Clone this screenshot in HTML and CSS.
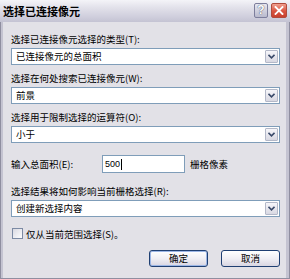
FILE: index.html
```html
<!DOCTYPE html>
<html lang="zh-CN">
<head>
<meta charset="utf-8">
<link rel="stylesheet" href="styles.css">
</head>
<body>
<div class="window">
  <div class="titlebar">
    <span class="title">选择已连接像元</span>
    <div class="caption-btns">
      <div class="cap-btn help">?</div>
      <div class="cap-btn close">
        <svg width="10" height="9" viewBox="0 0 10 9"><path d="M1.5 1 L8.5 8 M8.5 1 L1.5 8" stroke="#fff" stroke-width="1.8" fill="none" stroke-linecap="square"/></svg>
      </div>
    </div>
  </div>
  <div class="content">
    <div class="group">
      <div class="label">选择已连接像元选择的类型(T):</div>
      <div class="combo"><span class="combo-text">已连接像元的总面积</span><span class="arrow"><svg width="7" height="5" viewBox="0 0 7 5"><path d="M0.5 0.8 L3.5 3.8 L6.5 0.8" stroke="#3a4a6a" stroke-width="1.6" fill="none"/></svg></span></div>
    </div>
    <div class="group">
      <div class="label">选择在何处搜索已连接像元(W):</div>
      <div class="combo"><span class="combo-text">前景</span><span class="arrow"><svg width="7" height="5" viewBox="0 0 7 5"><path d="M0.5 0.8 L3.5 3.8 L6.5 0.8" stroke="#3a4a6a" stroke-width="1.6" fill="none"/></svg></span></div>
    </div>
    <div class="group">
      <div class="label">选择用于限制选择的运算符(O):</div>
      <div class="combo"><span class="combo-text">小于</span><span class="arrow"><svg width="7" height="5" viewBox="0 0 7 5"><path d="M0.5 0.8 L3.5 3.8 L6.5 0.8" stroke="#3a4a6a" stroke-width="1.6" fill="none"/></svg></span></div>
    </div>
    <div class="input-row">
      <span class="input-label">输入总面积(E):</span>
      <div class="textbox">500<span class="caret"></span></div>
      <span class="unit">栅格像素</span>
    </div>
    <div class="group group-last">
      <div class="label">选择结果将如何影响当前栅格选择(R):</div>
      <div class="combo"><span class="combo-text">创建新选择内容</span><span class="arrow"><svg width="7" height="5" viewBox="0 0 7 5"><path d="M0.5 0.8 L3.5 3.8 L6.5 0.8" stroke="#3a4a6a" stroke-width="1.6" fill="none"/></svg></span></div>
    </div>
    <div class="check-row">
      <span class="checkbox"></span>
      <span class="check-label">仅从当前范围选择(S)。</span>
    </div>
    <div class="buttons">
      <div class="btn default">确定</div>
      <div class="btn">取消</div>
    </div>
  </div>
</div>
</body>
</html>
```

FILE: styles.css
```css
html, body {
  margin: 0;
  padding: 0;
}
body {
  width: 290px;
  height: 279px;
  overflow: hidden;
  font-family: "Noto Sans CJK SC", "Liberation Sans", sans-serif;
  font-size: 9.5px;
  color: #000;
}
.window {
  width: 290px;
  height: 279px;
  box-sizing: border-box;
  background: #c4c3d1;
  border-left: 1px solid #8f8ea0;
  border-right: 1px solid #8f8ea0;
  border-bottom: 1px solid #8f8ea0;
  display: flex;
  flex-direction: column;
}
.titlebar {
  height: 22px;
  flex: none;
  display: flex;
  align-items: center;
  justify-content: space-between;
  padding: 0 3px 0 3px;
  background: linear-gradient(#f4f4f8 0%, #e2e1ea 35%, #d0cfdd 75%, #c4c3d3 100%);
  margin: 0 -1px;
}
.title {
  font-weight: bold;
  font-size: 11px;
  line-height: 14px;
  color: #000;
  margin-top: -1px;
}
.caption-btns {
  display: flex;
  gap: 3px;
  margin-top: -1px;
}
.cap-btn {
  height: 15px;
  box-sizing: border-box;
  border-radius: 2px;
  display: flex;
  align-items: center;
  justify-content: center;
}
.help {
  width: 14px;
  border: 1px solid #7d7e9c;
  background: linear-gradient(#e8e8f0, #b9bacd);
  color: #fff;
  font-family: "Liberation Sans", sans-serif;
  font-weight: bold;
  font-size: 12px;
  line-height: 13px;
  text-shadow: 0 0 1px #55566e, 0 0 1px #55566e;
}
.close {
  width: 16px;
  border: 1px solid #b04a3c;
  background: linear-gradient(#f0a090, #d9533f 55%, #c8402e);
}
.content {
  flex: 1;
  margin-left: 2px;
  margin-right: 3px;
  background: #e2e1e7;
  padding: 11px 6px 0 8px;
  display: flex;
  flex-direction: column;
}
.group {
  display: flex;
  flex-direction: column;
  margin-bottom: 7px;
}
.label {
  height: 13px;
  line-height: 13px;
  margin-bottom: 2px;
  white-space: nowrap;
}
.combo {
  height: 17px;
  box-sizing: border-box;
  border: 1px solid #7f9db9;
  background: #fff;
  display: flex;
  align-items: center;
  justify-content: space-between;
  padding: 1px;
}
.combo-text {
  padding-left: 3px;
  line-height: 13px;
  white-space: nowrap;
}
.arrow {
  width: 13px;
  height: 13px;
  box-sizing: border-box;
  border: 1px solid #b3b8c8;
  border-radius: 1px;
  background: linear-gradient(#f6f6fa, #d8d8e2);
  display: flex;
  align-items: center;
  justify-content: center;
}
.input-row {
  display: flex;
  align-items: center;
  margin-top: 5px;
  height: 18px;
}
.input-label {
  width: 91px;
  white-space: nowrap;
}
.textbox {
  width: 83px;
  height: 18px;
  box-sizing: border-box;
  border: 1px solid #7f9db9;
  background: #fff;
  padding-left: 2px;
  display: flex;
  align-items: center;
  font-family: "Liberation Sans", sans-serif;
  font-size: 9px;
}
.caret {
  width: 1px;
  height: 11px;
  background: #000;
  margin-left: 1px;
}
.unit {
  margin-left: 5px;
  white-space: nowrap;
}
.group-last {
  margin-top: 12px;
  margin-bottom: 0;
}
.check-row {
  display: flex;
  align-items: center;
  height: 13px;
  margin-top: 10px;
}
.checkbox {
  width: 11px;
  height: 11px;
  box-sizing: border-box;
  border: 1px solid #7c8aa4;
  background: linear-gradient(135deg, #d9d9e2, #fdfdfe);
  margin-left: 1px;
  margin-right: 3px;
}
.check-label {
  white-space: nowrap;
}
.buttons {
  display: flex;
  justify-content: flex-end;
  gap: 13px;
  margin-top: 10px;
}
.btn {
  width: 59px;
  height: 17px;
  box-sizing: border-box;
  border: 1px solid #1f3f72;
  border-radius: 3px;
  background: linear-gradient(#ffffff, #f0eff4 50%, #d8d6e2);
  display: flex;
  align-items: center;
  justify-content: center;
  line-height: 13px;
}
.btn.default {
  box-shadow: inset 0 0 0 1px #9cb6e6;
}
```
